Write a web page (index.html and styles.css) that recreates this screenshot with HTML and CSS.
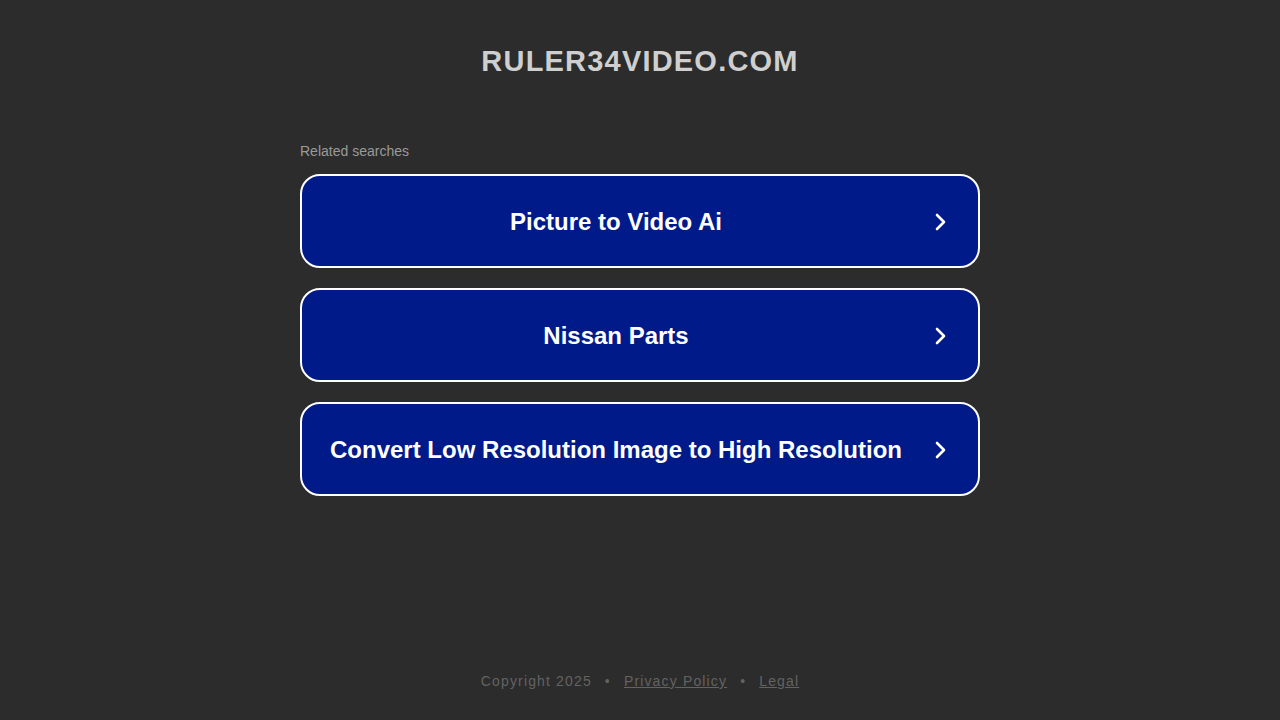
FILE: index.html
```html
<!DOCTYPE html>
<html>
<head>
<meta charset="utf-8">
<link rel="stylesheet" href="styles.css">
</head>
<body>
<div class="page">
  <header class="header">
    <h1 class="domain">RULER34VIDEO.COM</h1>
  </header>
  <main class="main">
    <div class="related">Related searches</div>
    <div class="list">
      <a class="item" href="#"><span class="label">Picture to Video Ai</span><svg class="chev" viewBox="0 0 24 24" width="24" height="24"><path d="M9 5l7 7-7 7" fill="none" stroke="#fff" stroke-width="2.6" stroke-linecap="round" stroke-linejoin="round"/></svg></a>
      <a class="item" href="#"><span class="label">Nissan Parts</span><svg class="chev" viewBox="0 0 24 24" width="24" height="24"><path d="M9 5l7 7-7 7" fill="none" stroke="#fff" stroke-width="2.6" stroke-linecap="round" stroke-linejoin="round"/></svg></a>
      <a class="item" href="#"><span class="label">Convert Low Resolution Image to High Resolution</span><svg class="chev" viewBox="0 0 24 24" width="24" height="24"><path d="M9 5l7 7-7 7" fill="none" stroke="#fff" stroke-width="2.6" stroke-linecap="round" stroke-linejoin="round"/></svg></a>
    </div>
  </main>
  <footer class="footer">
    <span>Copyright 2025</span><span class="dot">•</span><a href="#">Privacy Policy</a><span class="dot">•</span><a href="#">Legal</a>
  </footer>
</div>
</body>
</html>
```
FILE: styles.css
```css
html, body {
  margin: 0;
  padding: 0;
  background: #2c2c2c;
  font-family: "Liberation Sans", Arial, sans-serif;
}
.page {
  height: 720px;
  display: flex;
  flex-direction: column;
  align-items: center;
}
.header {
  padding-top: 42px;
  height: 94px;
  box-sizing: border-box;
}
.domain {
  margin: 0;
  font-size: 29px;
  line-height: 38px;
  font-weight: bold;
  letter-spacing: 1.2px;
  color: #cfcfcf;
}
.main {
  width: 680px;
  margin-top: 49px;
}
.related {
  font-size: 14px;
  line-height: 16px;
  color: #9a9a9a;
  margin-bottom: 15px;
}
.list {
  display: flex;
  flex-direction: column;
  gap: 20px;
}
.item {
  display: flex;
  align-items: center;
  height: 94px;
  box-sizing: border-box;
  border: 2px solid #fff;
  border-radius: 20px;
  background: #001a8a;
  text-decoration: none;
  padding: 2px 26px 0 28px;
}
.label {
  flex: 1;
  text-align: center;
  color: #fff;
  font-size: 24px;
  font-weight: bold;
}
.chev {
  margin-left: 26px;
  flex: none;
}
.footer {
  margin-top: auto;
  margin-bottom: 31px;
  font-size: 14px;
  line-height: 16px;
  letter-spacing: 1.15px;
  color: #636363;
}
.footer a {
  color: #636363;
  text-decoration: underline;
}
.dot {
  margin: 0 13px;
}
```
